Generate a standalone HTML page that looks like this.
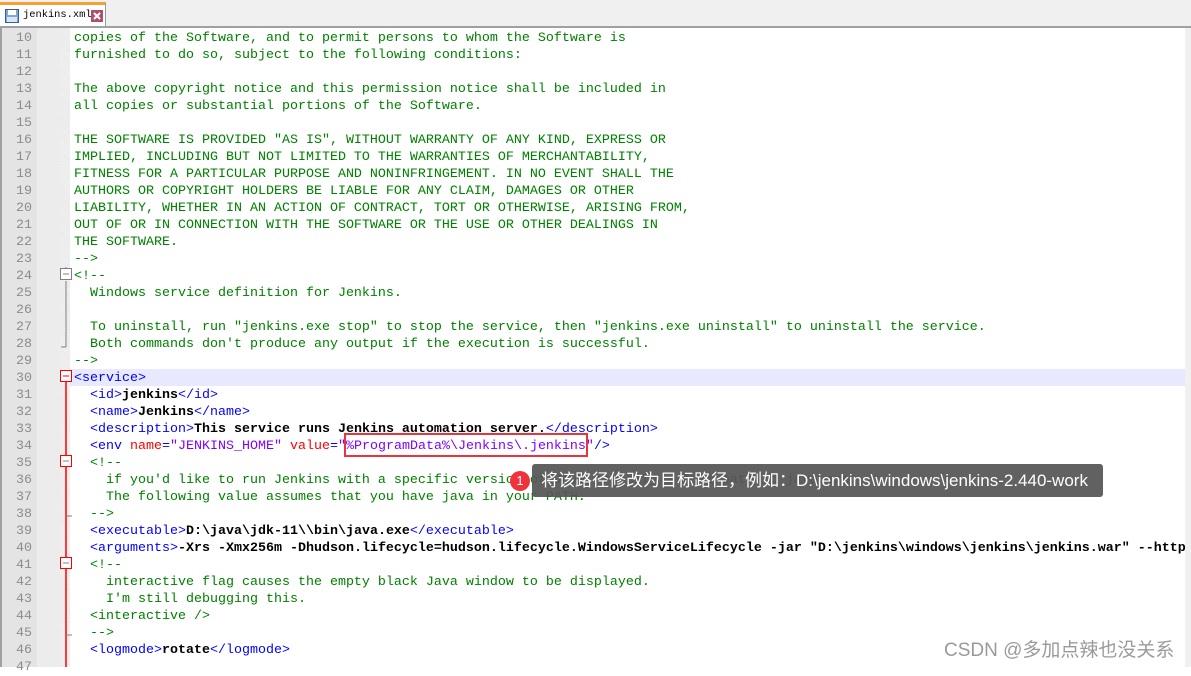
<!DOCTYPE html>
<html><head><meta charset="utf-8"><style>
*{margin:0;padding:0}
body{width:1191px;height:667px;overflow:hidden;background:#fff;position:relative;font-family:"Liberation Mono",monospace}
#tabbar{position:absolute;left:0;top:0;width:1191px;height:26px;background:#f0f0f0;border-bottom:2px solid #a0a0a0}
#tab{position:absolute;left:0;top:2px;width:106px;height:24px;background:#fff;border-top:3px solid #f5a030;border-right:1px solid #999;box-sizing:border-box}
#tab .t{position:absolute;left:23px;top:4px;font-size:10.4px;color:#000}
#lnum{position:absolute;left:0;top:28px;width:35px;height:639px;background:#e4e4e4;border-left:2px solid #a0a0a0}
#lm{position:absolute;left:37px;top:28px;width:23px;height:639px;background:#ececec}
#fold{position:absolute;left:60px;top:28px;width:10px;height:639px;background:repeating-linear-gradient(45deg,#f4f4f4 0 1px,#e6e6e6 1px 2px)}
.hl{position:absolute;left:70px;top:369px;width:1115px;height:17px;background:#e8e8ff}
.ln{position:absolute;left:2px;width:30px;text-align:right;font-size:13.33px;color:#8c8c8c;line-height:17px;margin-top:1px}
.l{position:absolute;left:74px;font-size:13.33px;line-height:17px;white-space:pre;margin-top:1px}
.c{color:#008000}.g{color:#0000ff}.a{color:#ff0000}.v{color:#8000ff;}.b{color:#000;font-weight:bold}
</style></head><body>
<div id="tabbar"><div id="tab">
<svg style="position:absolute;left:5px;top:4px" width="14" height="14"><rect x="0.5" y="0.5" width="13" height="13" fill="#7fa7d8" stroke="#3060a0"/><rect x="3" y="1" width="8" height="5" fill="#fff"/><rect x="2" y="8" width="10" height="5" fill="#d9e6f5"/></svg>
<span class="t">jenkins.xml</span>
<svg style="position:absolute;left:91px;top:5px" width="12" height="12"><rect width="12" height="12" fill="#b05070"/><path d="M3 3L9 9M9 3L3 9" stroke="#fff" stroke-width="2"/></svg>
</div></div>
<div id="lnum"></div><div id="lm"></div><div id="fold"></div>
<div class="hl"></div>
<svg style="position:absolute;left:60px;top:28px" width="12" height="639">
<path d="M6 239V249M1 249H6" stroke="#808080" fill="none"/>
<path d="M6 253V319M1 319H6" stroke="#808080" fill="none"/>
<rect x="0.5" y="240.5" width="11" height="11" fill="#fff" stroke="#808080"/><path d="M3 246H9" stroke="#808080"/>
<path d="M6 354V639" stroke="#ff0000" stroke-width="1.5"/>
<path d="M6 488H12M6 607H12" stroke="#808080"/>
<rect x="0.5" y="342.5" width="11" height="11" fill="#fff" stroke="#ff0000"/><path d="M3 348H9" stroke="#ff0000"/>
<rect x="0.5" y="427.5" width="11" height="11" fill="#fff" stroke="#ff0000"/><path d="M3 433H9" stroke="#808080"/>
<rect x="0.5" y="529.5" width="11" height="11" fill="#fff" stroke="#ff0000"/><path d="M3 535H9" stroke="#808080"/>
</svg>
<div class="ln" style="top:29px">10</div><div class="l c" style="top:29px">copies of the Software, and to permit persons to whom the Software is</div>
<div class="ln" style="top:46px">11</div><div class="l c" style="top:46px">furnished to do so, subject to the following conditions:</div>
<div class="ln" style="top:63px">12</div>
<div class="ln" style="top:80px">13</div><div class="l c" style="top:80px">The above copyright notice and this permission notice shall be included in</div>
<div class="ln" style="top:97px">14</div><div class="l c" style="top:97px">all copies or substantial portions of the Software.</div>
<div class="ln" style="top:114px">15</div>
<div class="ln" style="top:131px">16</div><div class="l c" style="top:131px">THE SOFTWARE IS PROVIDED "AS IS", WITHOUT WARRANTY OF ANY KIND, EXPRESS OR</div>
<div class="ln" style="top:148px">17</div><div class="l c" style="top:148px">IMPLIED, INCLUDING BUT NOT LIMITED TO THE WARRANTIES OF MERCHANTABILITY,</div>
<div class="ln" style="top:165px">18</div><div class="l c" style="top:165px">FITNESS FOR A PARTICULAR PURPOSE AND NONINFRINGEMENT. IN NO EVENT SHALL THE</div>
<div class="ln" style="top:182px">19</div><div class="l c" style="top:182px">AUTHORS OR COPYRIGHT HOLDERS BE LIABLE FOR ANY CLAIM, DAMAGES OR OTHER</div>
<div class="ln" style="top:199px">20</div><div class="l c" style="top:199px">LIABILITY, WHETHER IN AN ACTION OF CONTRACT, TORT OR OTHERWISE, ARISING FROM,</div>
<div class="ln" style="top:216px">21</div><div class="l c" style="top:216px">OUT OF OR IN CONNECTION WITH THE SOFTWARE OR THE USE OR OTHER DEALINGS IN</div>
<div class="ln" style="top:233px">22</div><div class="l c" style="top:233px">THE SOFTWARE.</div>
<div class="ln" style="top:250px">23</div><div class="l c" style="top:250px">--&gt;</div>
<div class="ln" style="top:267px">24</div><div class="l c" style="top:267px">&lt;!--</div>
<div class="ln" style="top:284px">25</div><div class="l c" style="top:284px">  Windows service definition for Jenkins.</div>
<div class="ln" style="top:301px">26</div>
<div class="ln" style="top:318px">27</div><div class="l c" style="top:318px">  To uninstall, run "jenkins.exe stop" to stop the service, then "jenkins.exe uninstall" to uninstall the service.</div>
<div class="ln" style="top:335px">28</div><div class="l c" style="top:335px">  Both commands don't produce any output if the execution is successful.</div>
<div class="ln" style="top:352px">29</div><div class="l c" style="top:352px">--&gt;</div>
<div class="ln" style="top:369px">30</div><div class="l g" style="top:369px">&lt;service&gt;</div>
<div class="ln" style="top:386px">31</div><div class="l" style="top:386px">  <span class="g">&lt;id&gt;</span><span class="b">jenkins</span><span class="g">&lt;/id&gt;</span></div>
<div class="ln" style="top:403px">32</div><div class="l" style="top:403px">  <span class="g">&lt;name&gt;</span><span class="b">Jenkins</span><span class="g">&lt;/name&gt;</span></div>
<div class="ln" style="top:420px">33</div><div class="l" style="top:420px">  <span class="g">&lt;description&gt;</span><span class="b">This service runs Jenkins automation server.</span><span class="g">&lt;/description&gt;</span></div>
<div class="ln" style="top:437px">34</div><div class="l" style="top:437px">  <span class="g">&lt;env </span><span class="a">name</span><span class="g">=</span><span class="v">"JENKINS_HOME"</span> <span class="a">value</span><span class="g">=</span><span class="v">"%ProgramData%\Jenkins\.jenkins"</span><span class="g">/&gt;</span></div>
<div class="ln" style="top:454px">35</div><div class="l c" style="top:454px">  &lt;!--</div>
<div class="ln" style="top:471px">36</div><div class="l c" style="top:471px">    if you'd like to run Jenkins with a specific version of Java, specify a full path to java.exe.</div>
<div class="ln" style="top:488px">37</div><div class="l c" style="top:488px">    The following value assumes that you have java in your PATH.</div>
<div class="ln" style="top:505px">38</div><div class="l c" style="top:505px">  --&gt;</div>
<div class="ln" style="top:522px">39</div><div class="l" style="top:522px">  <span class="g">&lt;executable&gt;</span><span class="b">D:\java\jdk-11\\bin\java.exe</span><span class="g">&lt;/executable&gt;</span></div>
<div class="ln" style="top:539px">40</div><div class="l" style="top:539px">  <span class="g">&lt;arguments&gt;</span><span class="b">-Xrs -Xmx256m -Dhudson.lifecycle=hudson.lifecycle.WindowsServiceLifecycle -jar "D:\jenkins\windows\jenkins\jenkins.war" --http</span></div>
<div class="ln" style="top:556px">41</div><div class="l c" style="top:556px">  &lt;!--</div>
<div class="ln" style="top:573px">42</div><div class="l c" style="top:573px">    interactive flag causes the empty black Java window to be displayed.</div>
<div class="ln" style="top:590px">43</div><div class="l c" style="top:590px">    I'm still debugging this.</div>
<div class="ln" style="top:607px">44</div><div class="l c" style="top:607px">  &lt;interactive /&gt;</div>
<div class="ln" style="top:624px">45</div><div class="l c" style="top:624px">  --&gt;</div>
<div class="ln" style="top:641px">46</div><div class="l" style="top:641px">  <span class="g">&lt;logmode&gt;</span><span class="b">rotate</span><span class="g">&lt;/logmode&gt;</span></div>
<div class="ln" style="top:658px">47</div>
<div style="position:absolute;left:1185px;top:28px;width:6px;height:639px;background:#f0f0f0"></div>
<div style="position:absolute;left:344px;top:433px;width:240px;height:20px;border:2px solid #e8343a"></div>
<div style="position:absolute;left:532px;top:464px;width:571px;height:33px;background:rgba(85,85,85,0.93);border-radius:3px;color:#fff;font-family:'Liberation Sans','Noto Sans CJK SC',sans-serif;font-size:17px;line-height:33px;padding-left:9px;box-sizing:border-box;white-space:nowrap">将该路径修改为目标路径，例如：D:\jenkins\windows\jenkins-2.440-work</div>
<div style="position:absolute;left:510px;top:471px;width:20px;height:20px;border-radius:50%;background:#f0323c;color:#fff;font-family:'Liberation Sans',sans-serif;font-size:13px;line-height:20px;text-align:center">1</div>
<div style="position:absolute;left:944px;top:635px;color:#9a9a9a;font-family:'Liberation Sans','Noto Sans CJK SC',sans-serif;font-size:19px;white-space:nowrap">CSDN @多加点辣也没关系</div>
</body></html>
